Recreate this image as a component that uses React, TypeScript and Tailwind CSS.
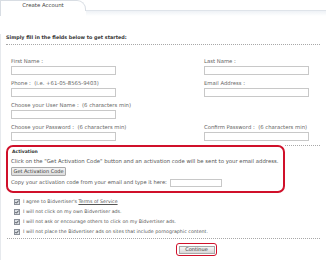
import React from "react";

const F = { fontFamily: '"DejaVu Sans", Verdana, sans-serif' };

function Field({ label }: { label: string }) {
  return (
    <div className="flex flex-col">
      <div className="h-[7px] leading-[7px] text-[#666] whitespace-pre">{label}</div>
      <div className="mt-[1px] h-[9px] w-[105px] border border-[#c8c8c8] bg-white" />
    </div>
  );
}

function Check() {
  return (
    <svg width="6" height="6" viewBox="0 0 6 6" className="shrink-0">
      <rect x="0.5" y="0.5" width="5" height="5" fill="#d9dde2" stroke="#8a9099" strokeWidth="1" />
      <path d="M1.4 3 L2.5 4.2 L4.6 1.6" fill="none" stroke="#3a3f46" strokeWidth="0.9" />
    </svg>
  );
}

export default function App() {
  return (
    <div className="w-[326px] h-[260px] bg-white overflow-hidden text-[5.3px] text-[#555]" style={F}>
      {/* header tabs */}
      <div className="flex h-[11px]">
        <div className="w-[86px] h-[11px] border-t border-l border-r border-[#d8dde3] rounded-tr-[9px] bg-white flex items-center justify-center pb-[1px] text-[#444] text-[5.4px]">
          Create Account
        </div>
        <div className="flex-1 border-b border-[#dfe4ea]" />
      </div>
      <div className="flex h-[5px]">
        <div className="w-[86px] border-l border-[#d8dde3] bg-white" />
        <div className="flex-1 bg-gradient-to-b from-[#eef2f6] to-white" />
      </div>

      <div className="border-l border-[#e6e9ed] h-[244px]">
        <div className="ml-[5px] mt-[18px] h-[7px] leading-[7px] font-bold text-[#333] text-[4.85px]">
          Simply fill in the fields below to get started:
        </div>
        <div className="ml-[5px] mr-[6px] mt-[3px] border-t border-dotted border-[#a8a8a8]" />

        <div className="mt-[13px] ml-[10px] grid grid-cols-[193px_1fr] gap-y-[5px]">
          <Field label="First Name :" />
          <Field label="Last Name :" />
          <Field label="Phone :  (i.e. +61-05-8565-9403)" />
          <Field label="Email Address :" />
          <Field label="Choose your User Name :  (6 characters min)" />
          <div />
          <Field label="Choose your Password :  (6 characters min)" />
          <Field label="Confirm Password :  (6 characters min)" />
        </div>

        <div className="mt-[4px] flex items-start">
          <div className="ml-[5px] w-[279px] h-[48px] border-2 border-[#d0102a] rounded-[7px] pl-[3px] pt-[1px] flex flex-col bg-white text-[5.35px]">
            <div className="h-[7px] leading-[7px] ml-[1px] font-bold text-[#333] text-[4.5px]">Activation</div>
            <div className="mt-[3px] h-[7px] leading-[7px] whitespace-nowrap">
              Click on the "Get Activation Code" button and an activation code will be sent to your email address.
            </div>
            <div className="mt-[2px] h-[9px] w-[55px] border border-[#a9a9a9] bg-gradient-to-b from-[#f4f4f4] to-[#dcdcdc] flex items-center justify-center text-[#333] rounded-[1px] text-[5px]">
              Get Activation Code
            </div>
            <div className="mt-[2px] h-[9px] flex items-center text-[5.2px]">
              <span>Copy your activation code from your email and type it here:</span>
              <div className="ml-[3px] h-[8px] w-[52px] border border-[#c8c8c8] bg-white" />
            </div>
          </div>
          <div className="flex-1 mr-[6px] border-t border-dotted border-[#a8a8a8]" />
        </div>

        <div className="mt-[4px] ml-[13px] flex flex-col text-[4.75px]">
          {[
            <>I agree to Bidvertiser's <span className="underline">Terms of Service</span></>,
            <>I will not click on my own Bidvertiser ads.</>,
            <>I will not ask or encourage others to click on my Bidvertiser ads.</>,
            <>I will not place the Bidvertiser ads on sites that include pornographic content.</>,
          ].map((t, i) => (
            <div key={i} className="h-[10px] flex items-center gap-[3px] whitespace-nowrap">
              <Check />
              <span>{t}</span>
            </div>
          ))}
        </div>
        <div className="ml-[6px] mr-[6px] mt-[1px] border-t border-dotted border-[#a8a8a8]" />

        <div className="mt-[4px] flex justify-center pl-[66px]">
          <div className="border-[1.5px] border-[#d0102a] rounded-[3px] p-[1.5px]">
            <div className="h-[8px] w-[36px] border border-[#a9a9a9] bg-gradient-to-b from-[#f6f6f6] to-[#d8d8d8] flex items-center justify-center text-[#333] text-[5px]">
              Continue
            </div>
          </div>
        </div>
      </div>
    </div>
  );
}
